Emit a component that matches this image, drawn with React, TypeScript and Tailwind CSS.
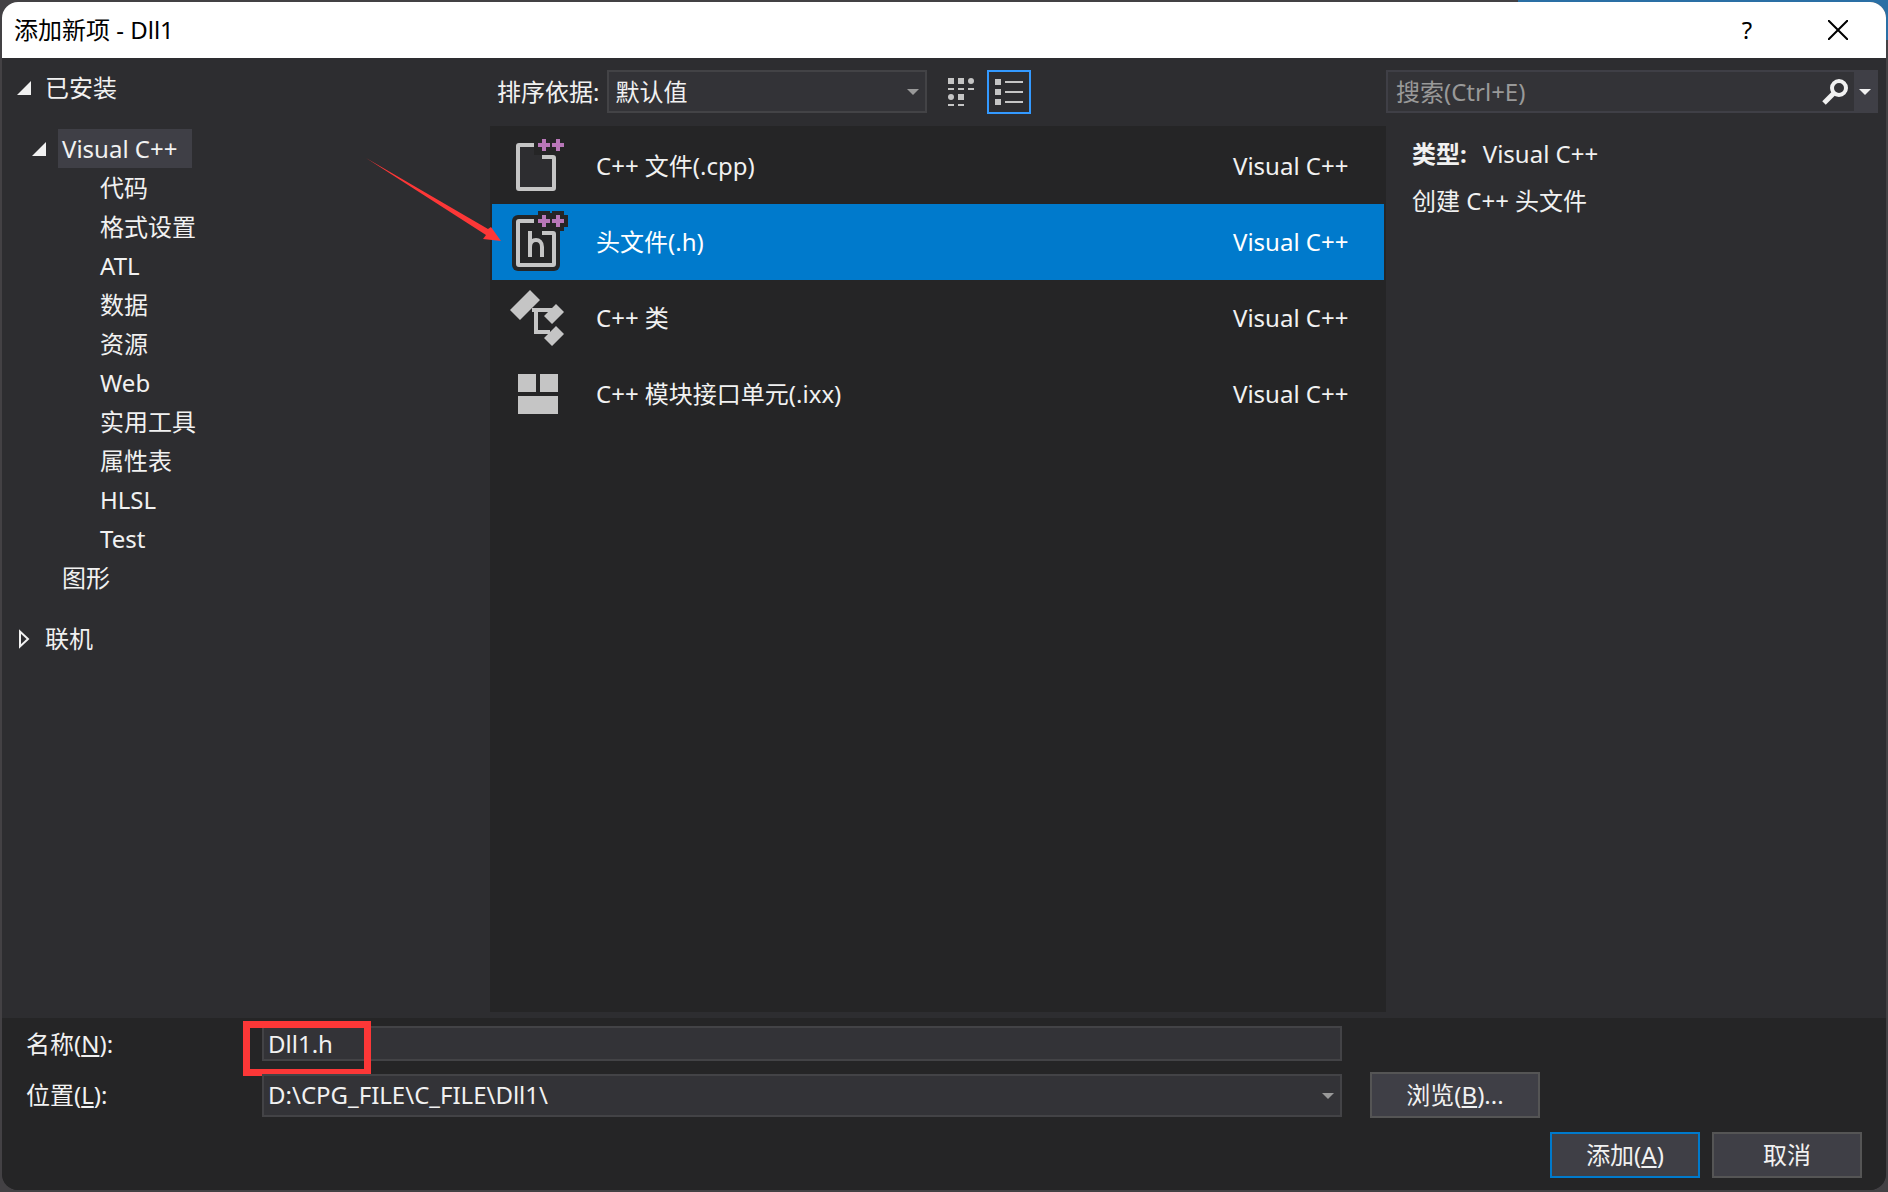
import type { ReactNode } from "react";

const categories = ["代码", "格式设置", "ATL", "数据", "资源", "Web", "实用工具", "属性表", "HLSL", "Test"];

const templates = [
  { name: "C++ 文件(.cpp)", language: "Visual C++", icon: CppFileIcon },
  { name: "头文件(.h)", language: "Visual C++", icon: HeaderFileIcon, selected: true },
  { name: "C++ 类", language: "Visual C++", icon: ClassIcon },
  { name: "C++ 模块接口单元(.ixx)", language: "Visual C++", icon: ModuleIcon },
];

function Pluses() {
  return (
    <path
      d="M32 5h4v4h4v4h-4v4h-4v-4h-4V9h4zM46 5h4v4h4v4h-4v4h-4v-4h-4V9h4z"
      fill="#b877b8"
    />
  );
}

function FileOutline() {
  return (
    <path
      d="M24 9H9a3 3 0 0 0-3 3v42a3 3 0 0 0 3 3h34a3 3 0 0 0 3-3V24a3 3 0 0 0-3-3H32v4h10v28H10V13h14z"
      fill="#c5c5c5"
    />
  );
}

function CppFileIcon() {
  return (
    <svg width="60" height="64" viewBox="0 0 60 64">
      <path d="M10 13h14v8h18v32H10z" fill="#2d2d30" />
      <FileOutline />
      <path d="M24 5h10v16h-6v-4h-4z" fill="#252526" />
      <Pluses />
    </svg>
  );
}

function HeaderFileIcon() {
  return (
    <svg width="60" height="64" viewBox="0 0 60 64">
      <rect x="2" y="5" width="48" height="56" rx="6" fill="#252526" />
      <path d="M28 1h12v2h2V1h12v4h4v12h-4v4H28z" fill="#252526" />
      <FileOutline />
      <Pluses />
      <path d="M20 21v26M20 37c0-5 3-7 6-7s6 2 6 7v10" fill="none" stroke="#c5c5c5" strokeWidth="4" />
    </svg>
  );
}

function ClassIcon() {
  return (
    <svg width="60" height="64" viewBox="0 0 60 64" fill="#c5c5c5">
      <path d="M0 24 20 4l10 10-20 20zM34 30l12-12 8 8-12 12zM34 52l12-12 8 8-12 12z" />
      <path d="M22 24h20M26 24v22h14" fill="none" stroke="#c5c5c5" strokeWidth="4" />
    </svg>
  );
}

function ModuleIcon() {
  return (
    <svg width="60" height="64" viewBox="0 0 60 64" fill="#c5c5c5">
      <path d="M8 12h18v18H8zM30 12h18v18H30zM8 34h40v18H8z" />
    </svg>
  );
}

function Expanded() {
  return (
    <svg width="14" height="14" viewBox="0 0 14 14" fill="#f1f1f1">
      <path d="M14 0v14H0z" />
    </svg>
  );
}

function DropArrow({ className }: { className?: string }) {
  return (
    <svg width="12" height="6" viewBox="0 0 12 6" fill="currentColor" className={className}>
      <path d="M0 0h12L6 6z" />
    </svg>
  );
}

function DialogButton({ children, className }: { children: ReactNode; className: string }) {
  return (
    <button type="button" className={`h-[46px] border-2 bg-[#3f3f46] ${className}`}>
      {children}
    </button>
  );
}

function TitleBar() {
  return (
    <header className="flex h-14 items-center bg-white pl-3 pr-0.5 text-black">
      <h1 className="grow">添加新项 - Dll1</h1>
      <button type="button" aria-label="帮助" className="w-[90px]">
        ?
      </button>
      <button type="button" aria-label="关闭" className="flex w-[92px] justify-center">
        <svg width="20" height="20" viewBox="0 0 20 20" stroke="#000" strokeWidth="2">
          <path d="M0 0l20 20M20 0L0 20" />
        </svg>
      </button>
    </header>
  );
}

function Sidebar() {
  return (
    <nav className="w-[488px] shrink-0 pt-3">
      <div className="flex h-9 items-center gap-3.5 pl-[15px]">
        <Expanded />
        已安装
      </div>
      <div className="mt-[23px] flex h-[39px] items-center gap-3 pl-[30px]">
        <Expanded />
        <span className="flex h-[39px] w-[134px] items-center bg-[#3f3f46] px-1">Visual C++</span>
      </div>
      <ul className="pl-[98px]">
        {categories.map((name) => (
          <li key={name} className="h-[39px] leading-[39px]">
            {name}
          </li>
        ))}
      </ul>
      <div className="h-[39px] pl-[60px] leading-[39px]">图形</div>
      <div className="mt-[21px] flex h-[42px] items-center gap-3.5 pl-[17px]">
        <svg width="12" height="20" viewBox="0 0 12 20" fill="none" stroke="#f1f1f1" strokeWidth="2">
          <path d="M1 2.500v15L9 10z" />
        </svg>
        联机
      </div>
    </nav>
  );
}

function Toolbar() {
  return (
    <div className="flex h-[68px] items-start pl-[7px] pt-3">
      <label htmlFor="sort" className="leading-[43px]">
        排序依据:
      </label>
      <div className="relative ml-2 h-[43px] w-80">
        <select
          id="sort"
          className="h-full w-full appearance-none border-2 border-[#434346] bg-[#333337] pl-1.5 outline-none"
        >
          <option>默认值</option>
        </select>
        <DropArrow className="pointer-events-none absolute right-2 top-[19px] text-[#999999]" />
      </div>
      <button type="button" aria-label="中等图标" className="ml-3 flex size-11 items-center justify-center">
        <svg width="26" height="28" viewBox="0 0 26 28" fill="#c5c5c5">
          <path d="M0 0h6v6H0zM10 0h6v6h-6zM10 16h6v6h-6zM0 10h6v2H0zM10 10h6v2h-6zM20 10h6v2h-6zM0 26h6v2H0zM10 26h6v2h-6z" />
          <circle cx="23" cy="3" r="3" />
          <circle cx="3" cy="19" r="3" />
        </svg>
      </button>
      <button
        type="button"
        aria-label="小图标"
        className="ml-1 flex size-11 items-center justify-center border-2 border-[#3399ff]"
      >
        <svg width="28" height="26" viewBox="0 0 28 26" fill="#c5c5c5">
          <path d="M0 0h6v6H0zM0 10h6v6H0zM0 20h6v6H0zM10 2h18v2H10zM10 12h18v2H10zM10 22h18v2H10z" />
        </svg>
      </button>
    </div>
  );
}

function TemplateList() {
  return (
    <section className="flex min-w-0 grow flex-col">
      <Toolbar />
      <ul className="grow bg-[#252526] p-0.5">
        {templates.map(({ name, language, icon: Icon, selected }) => (
          <li
            key={name}
            className={`flex h-19 items-center pl-[18px] pr-[26px] ${selected ? "bg-[#007acc] text-white" : ""}`}
          >
            <Icon />
            <span className="ml-[26px] grow">{name}</span>
            <span className="w-[125px] whitespace-nowrap">{language}</span>
          </li>
        ))}
      </ul>
    </section>
  );
}

function Details() {
  return (
    <aside className="w-[500px] shrink-0 pr-2 pt-3">
      <div className="flex h-[43px] border-2 border-[#3f3f46] bg-[#333337]">
        <input
          type="search"
          aria-label="搜索"
          placeholder="搜索(Ctrl+E)"
          className="min-w-0 grow px-2 outline-none placeholder:text-[#999999]"
        />
        <button type="button" aria-label="搜索" className="flex w-[38px] items-center justify-center">
          <svg width="26" height="26" viewBox="0 0 26 26" fill="none" stroke="#f1f1f1">
            <circle cx="17" cy="9" r="7" strokeWidth="4" />
            <path d="M12 14L2 24" strokeWidth="5" />
          </svg>
        </button>
        <button type="button" aria-label="搜索选项" className="flex w-[22px] items-center justify-center bg-[#3f3f46]">
          <DropArrow />
        </button>
      </div>
      <div className="pl-[26px] pt-[17px]">
        <p className="flex h-[47px] items-center gap-4">
          <b>类型:</b>
          Visual C++
        </p>
        <p className="flex h-[47px] items-center">创建 C++ 头文件</p>
      </div>
    </aside>
  );
}

function Footer() {
  return (
    <footer className="bg-[#252526] px-6 pb-3 pt-2">
      <div className="flex items-start">
        <label htmlFor="name" className="w-[236px] shrink-0">
          名称(<u>N</u>):
        </label>
        <div className="relative mr-[520px] grow">
          <input
            id="name"
            defaultValue="Dll1.h"
            className="block h-[35px] w-full border-2 border-[#434346] bg-[#333337] px-1 outline-none"
          />
          <div className="pointer-events-none absolute -left-[19px] -top-[5px] h-[55px] w-32 border-[7px] border-[#fc3737]" />
        </div>
      </div>
      <div className="mt-2.5 flex items-center">
        <label htmlFor="location" className="w-[236px] shrink-0">
          位置(<u>L</u>):
        </label>
        <div className="relative mr-7 h-[43px] grow">
          <select
            id="location"
            className="h-full w-full appearance-none border-2 border-[#434346] bg-[#333337] pl-1 outline-none"
          >
            <option>D:\CPG_FILE\C_FILE\Dll1\</option>
          </select>
          <DropArrow className="pointer-events-none absolute right-2 top-[19px] text-[#999999]" />
        </div>
        <DialogButton className="mr-[322px] w-[170px] border-[#555555]">
          浏览(<u>B</u>)...
        </DialogButton>
      </div>
      <div className="mt-3.5 flex justify-end gap-3">
        <DialogButton className="w-[150px] border-[#007acc]">
          添加(<u>A</u>)
        </DialogButton>
        <DialogButton className="w-[150px] border-[#555555]">取消</DialogButton>
      </div>
    </footer>
  );
}

export default function App() {
  return (
    <div className="relative flex h-screen flex-col bg-[#434144] p-0.5 font-['Noto_Sans','Noto_Sans_CJK_SC',sans-serif] text-2xl leading-9 text-[#f1f1f1]">
      {/* editor window behind the dialog */}
      <div className="absolute right-0 top-0 h-10 w-[370px] bg-[#2a6fa5]" />
      <div className="relative flex grow flex-col overflow-hidden rounded-2xl bg-[#2d2d30]">
        <TitleBar />
        <main className="flex grow pb-1.5">
          <Sidebar />
          <TemplateList />
          <Details />
        </main>
        <Footer />
        {/* pointer towards the selected template */}
        <svg
          width="136"
          height="84"
          viewBox="0 0 136 84"
          fill="#fc3737"
          className="pointer-events-none absolute left-[364px] top-[156px]"
        >
          <path d="M0 0L122 71l3-2 10 14-18-2 3-4z" />
        </svg>
      </div>
    </div>
  );
}
